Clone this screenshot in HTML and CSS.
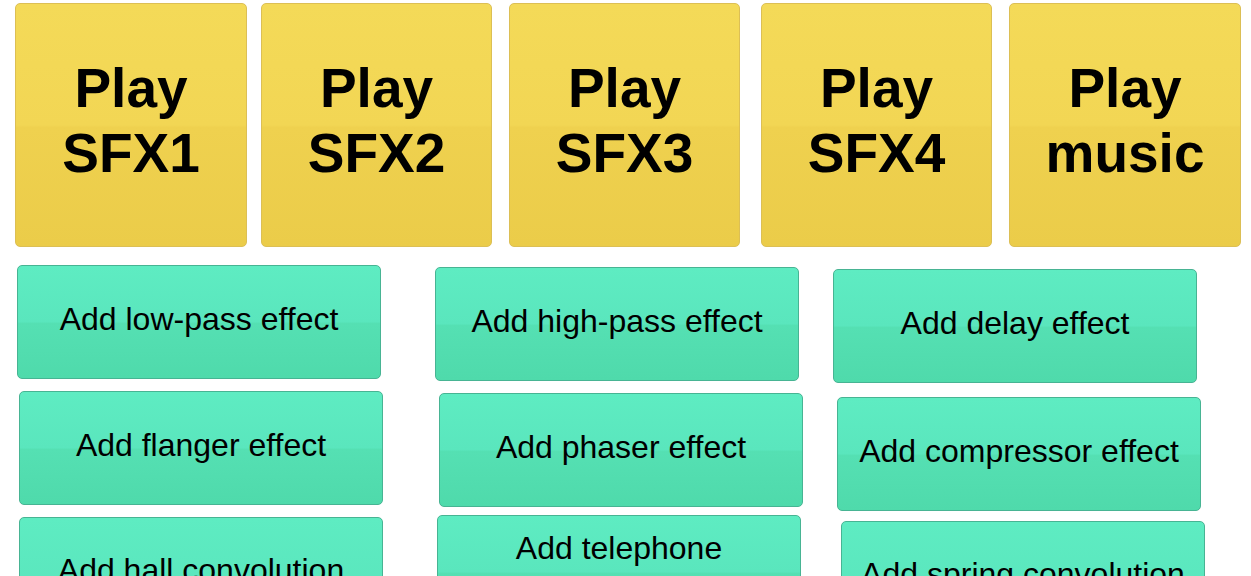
FILE: index.html
```html
<!doctype html>
<html>
<head>
	<meta charset="utf-8">
	<title>Sound test</title>
	<link rel="stylesheet" href="styles.css">
</head>
<body>
<main>
	<div class="players">
		<button class="play">Play<br>SFX1</button>
		<button class="play">Play<br>SFX2</button>
		<button class="play">Play<br>SFX3</button>
		<button class="play">Play<br>SFX4</button>
		<button class="play">Play<br>music</button>
	</div>

	<div class="effects">
		<button class="fx">Add low-pass effect</button>
		<button class="fx">Add high-pass effect</button>
		<button class="fx">Add delay effect</button>
		<button class="fx">Add flanger effect</button>
		<button class="fx">Add phaser effect</button>
		<button class="fx">Add compressor effect</button>
		<button class="fx tall">Add hall convolution effect</button>
		<button class="fx phone">Add telephone<br>effect</button>
		<button class="fx tall">Add spring convolution effect</button>
	</div>
</main>
</body>
</html>
```

FILE: styles.css
```css
html, body {
	margin: 0;
	background: #fff;
	overflow: hidden;
}
body {
	font-family: "Liberation Sans", Arial, sans-serif;
}
main {
	padding: 3px 0 0 15px;
}
button {
	font: inherit;
	color: #000;
	cursor: pointer;
	border-radius: 5px;
	padding: 0;
}

/* big yellow play buttons */
.players {
	display: flex;
	align-items: flex-start;
}
.play {
	width: 232px;
	height: 244px;
	font-size: 55px;
	font-weight: bold;
	line-height: 65px;
	padding-bottom: 8px;
	border: 1px solid #dcbf55;
	background: linear-gradient(#f4da58, #f2d654 50%, #efd14f 51%, #ebcc49);
}
.play:nth-child(2) { margin-left: 14px; width: 231px; }
.play:nth-child(3) { margin-left: 17px; width: 231px; }
.play:nth-child(4) { margin-left: 21px; width: 231px; }
.play:nth-child(5) { margin-left: 17px; }

/* green effect buttons */
.effects {
	display: grid;
	grid-template-columns: 418px 398px 372px;
	grid-auto-rows: 126px;
	align-items: start;
	margin: 18px 0 0 2px;
}
.fx {
	width: 364px;
	height: 114px;
	font-size: 32px;
	line-height: 37px;
	padding: 0 10px 6px;
	border: 1px solid #47b493;
	background: linear-gradient(#5eecc2, #5ae6bd 50%, #55e0b3 51%, #4fdaab);
}
.fx.tall {
	height: 150px;
}
.fx.phone {
	line-height: 42px;
}
.fx:nth-child(2) { margin-top: 2px; }
.fx:nth-child(3) { margin-top: 4px; }
.fx:nth-child(4) { margin-left: 2px; }
.fx:nth-child(5) { margin: 2px 0 0 4px; }
.fx:nth-child(6) { margin: 6px 0 0 4px; }
.fx:nth-child(7) { margin-left: 2px; }
.fx:nth-child(8) { margin: -2px 0 0 2px; }
.fx:nth-child(9) { margin: 4px 0 0 8px; }
```
